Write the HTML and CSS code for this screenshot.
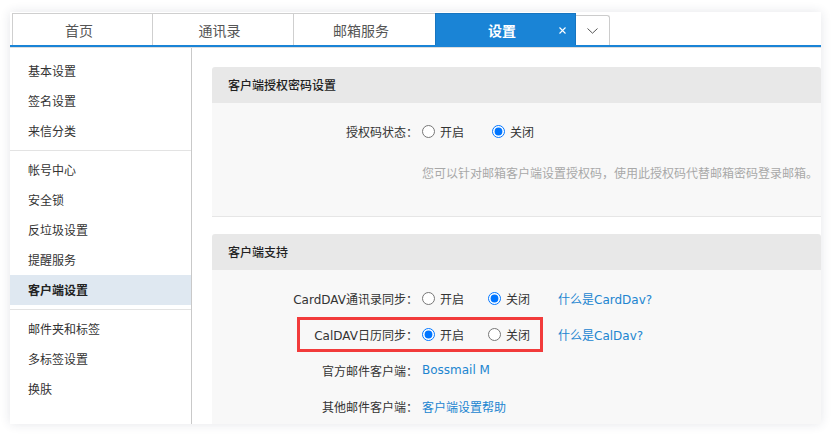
FILE: index.html
```html
<!DOCTYPE html>
<html lang="zh-CN">
<head>
<meta charset="utf-8">
<title>设置</title>
<link rel="stylesheet" href="styles.css">
</head>
<body>
<div class="app">
  <div class="tabbar">
    <div class="tab tab-1">首页</div>
    <div class="tab tab-2">通讯录</div>
    <div class="tab tab-3">邮箱服务</div>
    <div class="tab active">设置<svg class="close" width="7" height="7" viewBox="0 0 7 7"><path d="M0.5 0.5L6.5 6.5M6.5 0.5L0.5 6.5" stroke="#fff" stroke-width="1.1" fill="none"/></svg></div>
    <div class="tab more"><svg width="11" height="6" viewBox="0 0 11 6"><path d="M0.5 0.5L5.5 5.2L10.5 0.5" stroke="#555" stroke-width="1" fill="none"/></svg></div>
  </div>
  <div class="body">
    <aside class="sidebar">
      <ul class="group">
        <li>基本设置</li>
        <li>签名设置</li>
        <li>来信分类</li>
      </ul>
      <ul class="group">
        <li>帐号中心</li>
        <li>安全锁</li>
        <li>反垃圾设置</li>
        <li>提醒服务</li>
        <li class="current">客户端设置</li>
      </ul>
      <ul class="group last">
        <li>邮件夹和标签</li>
        <li>多标签设置</li>
        <li>换肤</li>
      </ul>
    </aside>
    <main class="main">
      <section class="panel">
        <div class="panel-head">客户端授权密码设置</div>
        <div class="panel-body auth">
          <div class="row">
            <span class="label">授权码状态<span class="cjk">：</span></span>
            <div class="field">
              <label class="opt wide"><input type="radio" name="auth">开启</label>
              <label class="opt"><input type="radio" name="auth" checked>关闭</label>
            </div>
          </div>
          <div class="row hint-row">
            <span class="label"></span>
            <div class="field hint cjk">您可以针对邮箱客户端设置授权码，使用此授权码代替邮箱密码登录邮箱。</div>
          </div>
        </div>
      </section>
      <section class="panel">
        <div class="panel-head">客户端支持</div>
        <div class="panel-body support">
          <div class="row tall">
            <span class="label">CardDAV通讯录同步<span class="cjk">：</span></span>
            <div class="field">
              <label class="opt"><input type="radio" name="card">开启</label>
              <label class="opt"><input type="radio" name="card" checked>关闭</label>
              <a class="link">什么是CardDav?</a>
            </div>
          </div>
          <div class="row tall marked">
            <span class="label">CalDAV日历同步<span class="cjk">：</span></span>
            <div class="field">
              <label class="opt"><input type="radio" name="cal" checked>开启</label>
              <label class="opt"><input type="radio" name="cal">关闭</label>
              <a class="link">什么是CalDav?</a>
            </div>
            <span class="highlight-box"></span>
          </div>
          <div class="row tall">
            <span class="label">官方邮件客户端<span class="cjk">：</span></span>
            <div class="field"><a class="link">Bossmail M</a></div>
          </div>
          <div class="row tall">
            <span class="label">其他邮件客户端<span class="cjk">：</span></span>
            <div class="field"><a class="link">客户端设置帮助</a></div>
          </div>
        </div>
      </section>
    </main>
  </div>
</div>
</body>
</html>
```

FILE: styles.css
```css
* { box-sizing: border-box; }

html, body {
  margin: 0;
  padding: 0;
  background: #ffffff;
}

body {
  font-family: "DejaVu Sans", "Noto Sans CJK SC", sans-serif;
  font-size: 12px;
  color: #333;
  padding: 12px 12px 12px 10px;
}

.cjk { font-family: "Noto Sans CJK SC", sans-serif; }

.app {
  width: 811px;
  height: 412px;
  background: #fff;
  box-shadow: 0 0 10px rgba(40, 50, 80, 0.12);
  overflow: hidden;
  display: flex;
  flex-direction: column;
}

/* ---------- tabs ---------- */
.tabbar {
  display: flex;
  align-items: flex-end;
  height: 35px;
  padding-left: 2px;
  border-bottom: 2px solid #1a84d6;
  flex: none;
}

.tab {
  height: 32px;
  border: 1px solid #cfcfcf;
  border-bottom: none;
  display: flex;
  align-items: center;
  justify-content: center;
  padding-right: 7px;
  font-family: "Noto Sans CJK SC", sans-serif;
  font-size: 14px;
  color: #555;
  background: #fff;
  margin-left: -1px;
}

.tab-1 { width: 141px; margin-left: 0; }
.tab-2 { width: 142px; }
.tab-3 { width: 143px; }

.tab.active {
  width: 141px;
  background: #1a84d6;
  border-color: #1775c0;
  color: #fff;
  font-weight: bold;
  position: relative;
}

.tab.active .close {
  position: absolute;
  right: 9px;
  top: 13px;
}

.tab.more {
  width: 35px;
  height: 30px;
  padding: 0;
  border-radius: 0 3px 0 0;
  border-color: #cccccc;
}

/* ---------- body ---------- */
.body {
  flex: 1;
  display: flex;
  border-top: 1px solid #dedede;
  min-height: 0;
}

.sidebar {
  width: 182px;
  flex: none;
  border-right: 1px solid #c9c9c9;
  padding-top: 4px;
}

.group {
  list-style: none;
  margin: 0;
  padding: 4px 0;
  border-bottom: 1px solid #e3e3e3;
}

.group.last { border-bottom: none; }

.group li {
  height: 30px;
  line-height: 30px;
  padding-left: 18px;
  font-family: "Noto Sans CJK SC", sans-serif;
  font-size: 12px;
  color: #333;
}

.group li.current {
  background: #dfe8f1;
  font-weight: bold;
  color: #222;
}

.main {
  flex: 1;
  padding: 19px 0 0 20px;
  min-width: 0;
}

.panel { margin-bottom: 17px; }

.panel-head {
  height: 36px;
  line-height: 36px;
  padding-left: 16px;
  background: #e8e8e8;
  border-radius: 3px 3px 0 0;
  font-family: "Noto Sans CJK SC", sans-serif;
  font-size: 12px;
  font-weight: 500;
  color: #222;
}

.panel-body {
  background: #f8f8f8;
}

.panel-body.auth {
  height: 114px;
  padding-top: 13px;
  border-bottom: 1px solid #e6e6e6;
}

.panel-body.support {
  padding-top: 10px;
  height: 200px;
}

.row {
  display: flex;
  align-items: center;
  height: 30px;
}

.row.tall { height: 36px; }

.hint-row { margin-top: 11px; }

.row.marked { position: relative; }

.label {
  width: 210px;
  padding-right: 4px;
  text-align: right;
  flex: none;
  color: #333;
}

.field {
  display: flex;
  align-items: center;
}

.hint { color: #a8a8a8; }

.opt {
  display: flex;
  align-items: center;
  width: 66px;
  color: #333;
}

.opt.wide { width: 70px; }

.opt input {
  width: 13px;
  height: 13px;
  margin: 0 5px 0 0;
}

.link {
  color: #2185d0;
  text-decoration: none;
  cursor: pointer;
  margin-left: 4px;
}

.field > .link:first-child { margin-left: 0; }

.highlight-box {
  position: absolute;
  left: 85px;
  top: 1px;
  width: 246px;
  height: 35px;
  border: 3px solid #f23b3b;
}
```
